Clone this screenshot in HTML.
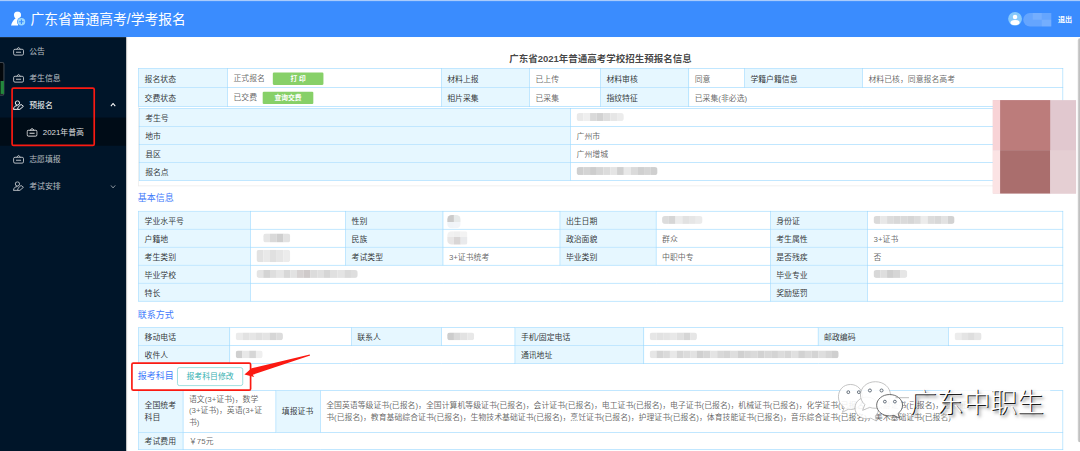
<!DOCTYPE html>
<html lang="zh-CN">
<head>
<meta charset="utf-8">
<title>广东省普通高考/学考报名</title>
<style>
html,body{margin:0;padding:0;width:1080px;height:451px;overflow:hidden;background:#fff;}
body{font-family:"Liberation Sans","Noto Sans CJK SC",sans-serif;}
#root{position:absolute;left:0;top:0;width:1920px;height:802px;transform:scale(0.5625);transform-origin:0 0;overflow:hidden;background:#fff;font-size:14px;line-height:21px;color:rgba(0,0,0,.65);}
#root *{box-sizing:border-box;}
.abs{position:absolute;}
/* header */
#hdr{left:0;top:0;width:1920px;height:66px;background:#3a8cfe;}
#hdr .topline{left:0;top:0;width:1920px;height:2px;background:#a9cbfb;}
#hdr .ttl{left:54px;top:18.8px;font-size:24.5px;line-height:32px;color:#fff;white-space:nowrap;letter-spacing:0;}
#hdr .out{right:14px;top:22.5px;font-size:12.6px;line-height:24px;color:#fff;font-weight:bold;white-space:nowrap;}
/* sidebar */
#side{left:0;top:66px;width:224px;height:736px;background:#001529;}
#side .sub{left:0;top:143px;width:224px;height:50px;background:#000c17;}
.mi{left:0;width:224px;height:40px;line-height:40px;color:rgba(255,255,255,.72);font-size:14px;white-space:nowrap;}
.mi svg{position:absolute;top:11px;}
.mi span{position:absolute;top:0;}
.mi.on{color:#fff;}
.mi.sel{color:rgba(255,255,255,.88);}
/* content */
#main{left:224px;top:66px;width:1696px;height:736px;background:#fff;}
table{border-collapse:collapse;table-layout:fixed;position:absolute;left:246px;width:1643px;}
td{border:1px solid #91d5ff;padding:3px 10px 0;height:32px;vertical-align:middle;white-space:nowrap;overflow:hidden;font-size:14px;line-height:21px;color:rgba(0,0,0,.62);background:#fff;}
td.l{background:#e6f7ff;color:rgba(0,0,0,.8);}
.h{left:245px;font-size:16px;line-height:24px;color:#3f7bfb;white-space:nowrap;}
.btn{display:inline-block;vertical-align:middle;height:22px;line-height:22px;width:90px;text-align:center;background:#87d068;color:#fff;font-size:12px;font-weight:bold;border-radius:2px;}
.mz{display:inline-block;vertical-align:middle;height:14px;border-radius:5px;overflow:hidden;position:relative;top:-2.5px;}
.mz i{display:inline-block;height:14px;width:12px;vertical-align:top;}
</style>
</head>
<body>
<div id="root">

<!-- header -->
<div id="hdr" class="abs">
  <div class="topline abs"></div>
  <svg class="abs" style="left:19px;top:20px" width="28" height="28" viewBox="0 0 28 28">
    <circle cx="12.1" cy="6.6" r="6.3" fill="#fff"/>
    <path d="M0.6 25.2 C2 19.5 5 15 9.2 11.8 L15.4 11.8 C13.6 15 12.8 19 13.2 25.2 Z" fill="#fff"/>
    <circle cx="19.1" cy="18.6" r="7.8" fill="#3a8cfe"/>
    <circle cx="19.1" cy="18.6" r="6.7" fill="#9bd8ff"/>
    <path d="M19.1 14.6v8M15.1 18.6h8" stroke="#3a8cfe" stroke-width="2" fill="none"/>
  </svg>
  <div class="ttl abs">广东省普通高考/学考报名</div>
  <svg class="abs" style="left:1792px;top:21px" width="25" height="25" viewBox="0 0 25 25">
    <circle cx="12.5" cy="12.5" r="12.3" fill="#86c9fb"/>
    <circle cx="12.5" cy="9" r="4" fill="#fff"/>
    <ellipse cx="12.5" cy="19" rx="8" ry="4.6" fill="#fff"/>
  </svg>
  <div class="abs" style="left:1819px;top:23px;width:50px;height:24px;border-radius:12px 0 0 12px;background:rgba(255,255,255,.22)"></div>
  <div class="abs" style="left:1836px;top:23px;width:16px;height:12px;background:rgba(255,255,255,.10)"></div>
  <div class="abs" style="left:1852px;top:35px;width:17px;height:12px;background:rgba(255,255,255,.10)"></div>
  <div class="out abs">退出</div>
</div>

<!-- sidebar -->
<div id="side" class="abs">
  <div class="sub abs"></div>
  <div class="mi abs" style="top:5px">
    <svg style="left:23px" width="20" height="18" viewBox="0 0 20 18"><use href="#ibag"/></svg><span style="left:52px">公告</span>
  </div>
  <div class="mi abs" style="top:53px">
    <svg style="left:23px" width="20" height="18" viewBox="0 0 20 18"><use href="#ibag"/></svg><span style="left:52px">考生信息</span>
  </div>
  <div class="mi abs on" style="top:101px">
    <svg style="left:23px" width="20" height="18" viewBox="0 0 20 18"><use href="#iusr"/></svg><span style="left:52px">预报名</span>
    <svg style="left:196px;top:15px" width="10" height="8" viewBox="0 0 10 8"><path d="M1 6.5 L5 2 L9 6.5" stroke="#fff" stroke-width="2" fill="none"/></svg>
  </div>
  <div class="mi abs sel" style="top:149px">
    <svg style="left:47px" width="20" height="18" viewBox="0 0 20 18"><use href="#ibag"/></svg><span style="left:76px">2021年普高</span>
  </div>
  <div class="mi abs" style="top:197px">
    <svg style="left:23px" width="20" height="18" viewBox="0 0 20 18"><use href="#ibag"/></svg><span style="left:52px">志愿填报</span>
  </div>
  <div class="mi abs" style="top:245px">
    <svg style="left:23px" width="20" height="18" viewBox="0 0 20 18"><use href="#iusr"/></svg><span style="left:52px">考试安排</span>
    <svg style="left:196px;top:17px" width="10" height="8" viewBox="0 0 10 8"><path d="M1 1.5 L5 6 L9 1.5" stroke="rgba(255,255,255,.6)" stroke-width="1.6" fill="none"/></svg>
  </div>
  <!-- recorder widget -->
  <div class="abs" style="left:-3px;top:44px;width:11px;height:60px;background:#04080c;border:2px solid #3d454d;border-radius:4px"></div>
  <div class="abs" style="left:1px;top:78px;width:6px;height:23px;background:#24873d"></div>
</div>

<svg width="0" height="0" style="position:absolute">
  <defs>
    <g id="ibag" fill="none" stroke="currentColor" stroke-width="1.7">
      <rect x="1.2" y="5.6" width="17.6" height="10.4" rx="2.4"/>
      <path d="M6.5 5.4 L10 2.4 L13.5 5.4"/>
      <path d="M5.5 10.8 H14.5" stroke-width="2"/>
    </g>
    <g id="iusr" fill="none" stroke="currentColor" stroke-width="1.7">
      <circle cx="8" cy="5" r="3.8"/>
      <path d="M1 16.6 C1.4 11.6 4 9.8 8 9.8"/>
      <path d="M1 16.4 H8"/>
      <path d="M8.2 16.6 L9 12.8 L14.4 7.6 L18.6 11 L12.4 16.4 Z"/>
    </g>
  </defs>
</svg>

<!-- main -->
<div id="main" class="abs"></div>
<div class="abs" style="left:224px;top:66px;width:2px;height:736px;background:#c4c4c4"></div>
<div class="abs" style="left:1915.5px;top:68px;width:6px;height:718px;background:linear-gradient(90deg,#d6d6d6,#bdbdbd 60%);border-radius:4px 0 0 4px"></div>

<div class="abs" style="left:246px;top:93px;width:1643px;text-align:center;font-size:16.9px;line-height:24px;font-weight:bold;color:rgba(0,0,0,.74);white-space:nowrap">广东省2021年普通高考学校招生预报名信息</div>

<!-- table 1 -->
<table style="top:121px">
<colgroup><col style="width:158px"><col style="width:380px"><col style="width:157px"><col style="width:126px"><col style="width:157px"><col style="width:99px"><col style="width:210px"><col style="width:356px"></colgroup>
<tr style="height:34px"><td class="l">报名状态</td><td>正式报名<span class="btn" style="margin-left:14px">打 印</span></td><td class="l">材料上报</td><td>已上传</td><td class="l">材料审核</td><td>同意</td><td class="l">学籍户籍信息</td><td>材料已核，同意报名高考</td></tr>
<tr style="height:34px"><td class="l">交费状态</td><td>已交费<span class="btn" style="margin-left:10px">查询交费</span></td><td class="l">相片采集</td><td>已采集</td><td class="l">指纹特征</td><td colspan="3">已采集(非必选)</td></tr>
</table>

<!-- wrapper box around table 2 -->
<div class="abs" style="left:246px;top:189px;width:1643px;height:142px;border:1px solid #e4e4e4;border-top:none"></div>
<table style="top:192px;left:247px;width:1642px">
<colgroup><col style="width:767px"><col style="width:875px"></colgroup>
<tr><td class="l">考生号</td><td><span class="mz"><i style="background:#e9e9e9"></i><i style="background:#efefef"></i><i style="background:#d9d9d9"></i><i style="background:#d2d2d2"></i><i style="background:#dedede"></i><i style="background:#e6e6e6"></i><i style="background:#ececec"></i></span></td></tr>
<tr><td class="l">地市</td><td>广州市</td></tr>
<tr><td class="l">县区</td><td>广州增城</td></tr>
<tr><td class="l">报名点</td><td><span class="mz"><i style="background:#cfcfcf"></i><i style="background:#d4d4d4"></i><i style="background:#cdcdcd"></i><i style="background:#d6d6d6"></i><i style="background:#dcdcdc"></i><i style="background:#e4e4e4"></i><i style="background:#d0d0d0"></i><i style="background:#e8e8e8"></i><i style="background:#dadada"></i><i style="background:#d0d0d0"></i><i style="background:#d5d5d5"></i><i style="background:#cfcfcf"></i></span></td></tr>
</table>

<!-- photo mosaic -->
<div class="abs" style="left:1765px;top:178px;width:148px;height:166px;background:#e1c8cf">
  <div class="abs" style="left:0;top:0;width:13px;height:89px;background:#f8d3d6"></div>
  <div class="abs" style="left:0;top:89px;width:13px;height:77px;background:#fbe3e4"></div>
  <div class="abs" style="left:13px;top:0;width:89px;height:89px;background:#bc7c7b"></div>
  <div class="abs" style="left:13px;top:89px;width:89px;height:77px;background:#aa6e6d"></div>
  <div class="abs" style="left:102px;top:89px;width:46px;height:77px;background:#e5cfd3"></div>
</div>

<div class="h abs" style="top:341px">基本信息</div>

<!-- table 3 -->
<table style="top:375px">
<colgroup><col style="width:199px"><col style="width:169px"><col style="width:173px"><col style="width:208px"><col style="width:171px"><col style="width:203px"><col style="width:173px"><col style="width:347px"></colgroup>
<tr><td class="l">学业水平号</td><td></td><td class="l">性别</td><td><span class="mz" style="height:24px;border-radius:8px;top:1px;margin-left:-3px"><i style="height:24px;background:linear-gradient(#cbcbcb 50%,#f0f4f8 50%)"></i><i style="height:24px;background:linear-gradient(#e7eaea 50%,#f2f5f9 50%)"></i></span></td><td class="l">出生日期</td><td><span class="mz"><i style="background:#dcdcdc"></i><i style="background:#d6d6d6"></i><i style="background:#ececec"></i><i style="background:#e2e2e2"></i><i style="background:#e6e6e6"></i><i style="background:#ebebeb"></i></span></td><td class="l">身份证</td><td><span class="mz"><i style="background:#dadada"></i><i style="background:#e8e8e8"></i><i style="background:#dcdcdc"></i><i style="background:#d8d8d8"></i><i style="background:#dadada"></i><i style="background:#d6d6d6"></i><i style="background:#dcdcdc"></i><i style="background:#ececec"></i><i style="background:#dcdcdc"></i><i style="background:#d8d8d8"></i><i style="background:#e2e2e2"></i><i style="background:#d2d2d2"></i></span></td></tr>
<tr><td class="l">户籍地</td><td><span class="mz" style="margin-left:12px;height:16px"><i style="background:#e6e6e6;height:16px"></i><i style="background:#d9d9d9;height:16px"></i><i style="background:#cfcfcf;height:16px"></i><i style="background:#e2e2e2;height:16px"></i></span></td><td class="l">民族</td><td><span class="mz" style="height:24px;border-radius:8px 4px 4px 8px;top:-2px;margin-left:-3px"><i style="height:24px;background:linear-gradient(#f1f1f1 45%,#e8e6e6 45%)"></i><i style="height:24px;background:linear-gradient(#efefef 45%,#d9d6d6 45%)"></i><i style="height:24px;background:linear-gradient(#f3f3f3 45%,#e9eaec 45%)"></i></span></td><td class="l">政治面貌</td><td>群众</td><td class="l">考生属性</td><td>3+证书</td></tr>
<tr><td class="l">考生类别</td><td><span class="mz" style="height:22px"><i style="background:#e2e2e2;height:22px"></i><i style="background:#e9e9e9;height:22px"></i><i style="background:#e0e0e0;height:22px"></i><i style="background:#e6e6e6;height:22px"></i><i style="background:#ececec;height:22px"></i></span></td><td class="l">考试类型</td><td>3+证书统考</td><td class="l">毕业类别</td><td>中职中专</td><td class="l">是否残疾</td><td>否</td></tr>
<tr><td class="l">毕业学校</td><td colspan="5"><span class="mz"><i style="background:#e4e4e4"></i><i style="background:#d4d4d4"></i><i style="background:#dedede"></i><i style="background:#e6e6e6"></i><i style="background:#d8d8d8"></i><i style="background:#e2e2e2"></i><i style="background:#d6d2d2"></i><i style="background:#cfcaca"></i><i style="background:#dcdcdc"></i><i style="background:#e0e0e0"></i><i style="background:#d6d6d6"></i><i style="background:#e0e0e0"></i><i style="background:#e4e4e4"></i><i style="background:#dadada"></i><i style="background:#dedede"></i></span></td><td class="l">毕业专业</td><td><span class="mz"><i style="background:#d8d8d8"></i><i style="background:#dedede"></i><i style="background:#cfcfcf"></i><i style="background:#d6d6d6"></i><i style="background:#e6e6e6"></i></span></td></tr>
<tr><td class="l">特长</td><td colspan="5"></td><td class="l">奖励惩罚</td><td></td></tr>
</table>

<div class="h abs" style="top:548px">联系方式</div>

<!-- table 4 -->
<table style="top:582px">
<colgroup><col style="width:162px"><col style="width:216px"><col style="width:160px"><col style="width:131px"><col style="width:229px"><col style="width:310px"><col style="width:232px"><col style="width:203px"></colgroup>
<tr><td class="l">移动电话</td><td><span class="mz"><i style="background:#ebebeb"></i><i style="background:#e2e2e2"></i><i style="background:#e6e6e6"></i><i style="background:#e0e0e0"></i><i style="background:#e4e4e4"></i><i style="background:#d6d6d6"></i><i style="background:#dcdcdc"></i></span></td><td class="l">联系人</td><td><span class="mz"><i style="background:#cdcdcd"></i><i style="background:#dadada"></i><i style="background:#e2e2e2"></i><i style="background:#e8e8e8"></i></span></td><td class="l">手机/固定电话</td><td><span class="mz"><i style="background:#e6e6e6"></i><i style="background:#e2e2e2"></i><i style="background:#e4e4e4"></i><i style="background:#e8e8e8"></i><i style="background:#e0e0e0"></i><i style="background:#d6d6d6"></i><i style="background:#e6e6e6"></i></span></td><td class="l">邮政编码</td><td><span class="mz"><i style="background:#ececec"></i><i style="background:#e4e4e4"></i><i style="background:#dedede"></i><i style="background:#e6e6e6"></i></span></td></tr>
<tr><td class="l">收件人</td><td colspan="3"><span class="mz"><i style="background:#cfcfcf"></i><i style="background:#e8e8e8"></i><i style="background:#d6d6d6"></i><i style="background:#efefef"></i></span></td><td class="l">通讯地址</td><td colspan="3"><span class="mz"><i style="background:#e6e6e6"></i><i style="background:#d4d4d4"></i><i style="background:#dadada"></i><i style="background:#e8e8e8"></i><i style="background:#d6d6d6"></i><i style="background:#dcdcdc"></i><i style="background:#e2e2e2"></i><i style="background:#d0d0d0"></i><i style="background:#d6d6d6"></i><i style="background:#e4e4e4"></i><i style="background:#d8d8d8"></i><i style="background:#d4d4d4"></i><i style="background:#dedede"></i><i style="background:#d0d0d0"></i><i style="background:#d6d6d6"></i><i style="background:#dadada"></i><i style="background:#d2d2d2"></i><i style="background:#d8d8d8"></i><i style="background:#d4d4d4"></i><i style="background:#dcdcdc"></i><i style="background:#d6d6d6"></i><i style="background:#e0e0e0"></i><i style="background:#d2d2d2"></i><i style="background:#dadada"></i><i style="background:#d4d4d4"></i><i style="background:#dedede"></i><i style="background:#d6d6d6"></i><i style="background:#cfcfcf"></i></span></td></tr>
</table>

<div class="h abs" style="top:656px">报考科目</div>
<div class="abs" style="left:315px;top:653px;width:117px;height:33px;border:1.6px solid #58c8c8;border-radius:4px;color:#35b1b1;font-size:14px;line-height:31px;text-align:center;background:#fff;white-space:nowrap">报考科目修改</div>

<!-- table 5 -->
<table style="top:693.5px">
<colgroup><col style="width:79px"><col style="width:165px"><col style="width:79px"><col style="width:1320px"></colgroup>
<tr style="height:74px"><td class="l" style="white-space:normal;padding:1px 10px 0">全国统考科目</td><td style="white-space:nowrap;padding:0 10px 1px">语文(3+证书)，数学<br>(3+证书)，英语(3+证<br>书)</td><td class="l" style="padding:0 10px">填报证书</td><td style="padding:0 10px">全国英语等级证书(已报名)，全国计算机等级证书(已报名)，会计证书(已报名)，电工证书(已报名)，电子证书(已报名)，机械证书(已报名)，化学证书(已报名)，旅游证书(已报名)，服装证<br>书(已报名)，教育基础综合证书(已报名)，生物技术基础证书(已报名)，烹饪证书(已报名)，护理证书(已报名)，体育技能证书(已报名)，音乐综合证书(已报名)，美术基础证书(已报名)</td></tr>
<tr style="height:31px"><td class="l" style="height:31px">考试费用</td><td colspan="3" style="height:31px">￥75元</td></tr>
</table>

<!-- red annotations -->
<div class="abs" style="left:20px;top:155px;width:149px;height:105px;border:3.2px solid #fb1a12;border-radius:4px"></div>
<div class="abs" style="left:233px;top:644px;width:214px;height:51px;border:3.2px solid #fb1a12;border-radius:4px"></div>
<svg class="abs" style="left:430px;top:620px" width="130" height="60" viewBox="0 0 130 60">
  <path d="M4.5 45.6 L17.3 34.6 L120.6 10.2 L121.4 12 L19.4 46.2 L22 50 Z" fill="#fb1a12"/>
</svg>

<!-- watermark -->
<div class="abs" style="left:1668px;top:690px;width:199px;height:54px;background:linear-gradient(90deg,rgba(255,255,255,0),rgba(255,255,255,.85) 12%,rgba(255,255,255,.85))"></div>
<svg class="abs" style="left:1480px;top:670px" width="140" height="90" viewBox="0 0 140 90">
  <g fill="rgba(255,255,255,.88)" stroke="#b4b4b4" stroke-width="1.4">
    <path d="M32 13.5 C19 13.5 10.5 23.5 10.5 35.5 C10.5 44 14.5 50.5 21 54.5 L17.5 63 L28 57.6 C30 58 31 58 32 58 C45 58 53.5 48 53.5 35.5 C53.5 23.5 45 13.5 32 13.5Z"/>
    <path d="M61 36 C49 36 40 44.5 40 55.3 C40 66 49 74.5 61 74.5 C63.5 74.5 66 74 68 73.4 L78 78.5 L76 69.5 C80 66 82 61 82 55.3 C82 44.5 73 36 61 36Z"/>
    <path d="M76.3 8.6 C61 8.6 49.7 19 49.7 32.2 C49.7 39 52.6 45 57.5 49.2 L53.5 59.5 L66 54.2 C69 55.4 72.6 55.8 76.3 55.8 C91.5 55.8 103 45.4 103 32.2 C103 19 91.5 8.6 76.3 8.6Z"/>
  </g>
  <path d="M101.5 31.4 C88.5 31.4 78.5 40 78.5 50.4 C78.5 60.8 88.5 69.4 101.5 69.4 C104.2 69.4 106.8 69 109.2 68.4 L119 73.5 L116.6 65 C121.6 61.4 124.5 56.2 124.5 50.4 C124.5 40 114.5 31.4 101.5 31.4Z" fill="rgba(255,255,255,.92)" stroke="#5c5c5c" stroke-width="1.6"/>
  <path d="M112 37 H136" stroke="#9a9a9a" stroke-width="1.2" fill="none"/>
  <g fill="#fff" stroke="#56616d" stroke-width="1.6"><circle cx="28.1" cy="27.2" r="2.5"/><circle cx="46.8" cy="27.2" r="2.5"/><circle cx="66.5" cy="24.2" r="2.7"/><circle cx="87.2" cy="24.2" r="2.7"/><circle cx="93.1" cy="44" r="2.5"/><circle cx="110.9" cy="44" r="2.5"/></g>
</svg>
<div class="abs" style="left:1617.5px;top:684px;font-size:47.6px;line-height:64px;font-weight:300;color:#fff;white-space:nowrap;text-shadow:1.8px 1.8px 1px rgba(0,0,0,.9),5px 5px 6px rgba(0,0,0,.5)">广东中职生</div>

</div>
</body>
</html>
